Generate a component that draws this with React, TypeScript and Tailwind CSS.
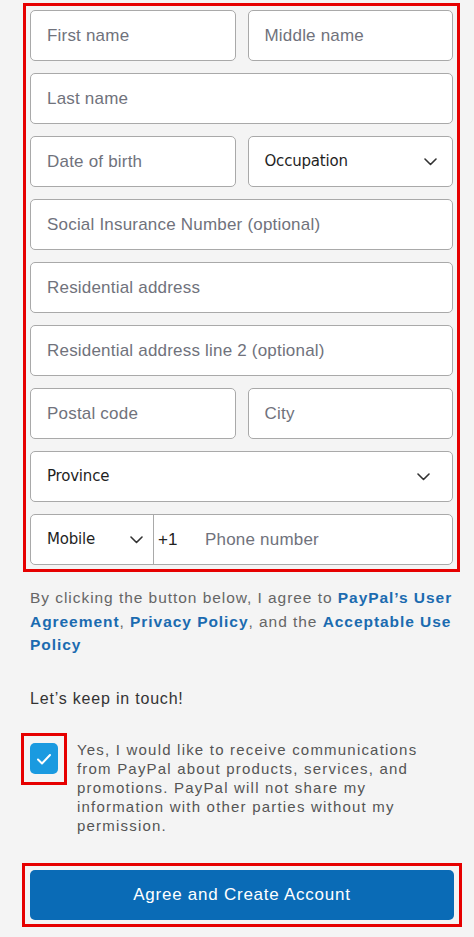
import React from "react";

const field =
  "h-[51px] w-full rounded-[5px] border border-[#a9a9a9] bg-white px-4 flex items-center text-[17px] text-[#70727c] tracking-[0.2px]";

function Chevron() {
  return (
    <svg width="13" height="8" viewBox="0 0 13 8" fill="none" className="shrink-0">
      <path d="M1 1l5.5 5.5L12 1" stroke="#333" strokeWidth="1.6" strokeLinecap="round" strokeLinejoin="round" />
    </svg>
  );
}

function Input({ label }: { label: string }) {
  return <div className={field}>{label}</div>;
}

function Select({ label, pr = "pr-5" }: { label: string; pr?: string }) {
  return (
    <div className={`${field} justify-between ${pr}`}>
      <span className="text-[15px] text-[#1f1f1f] font-['DejaVu_Sans',sans-serif] tracking-[-0.2px]">{label}</span>
      <Chevron />
    </div>
  );
}

export default function App() {
  return (
    <div className="w-[474px] h-[937px] bg-[#f4f4f4] pt-[3px] font-['Liberation_Sans',Arial,sans-serif]">
      {/* form fields */}
      <div className="ml-[23px] w-[437px] border-[3px] border-[#e60000] p-[4px] flex flex-col gap-3">
        <div className="grid grid-cols-2 gap-3">
          <Input label="First name" />
          <Input label="Middle name" />
        </div>
        <Input label="Last name" />
        <div className="grid grid-cols-2 gap-3">
          <Input label="Date of birth" />
          <Select label="Occupation" pr="pr-[15px]" />
        </div>
        <Input label="Social Insurance Number (optional)" />
        <Input label="Residential address" />
        <Input label="Residential address line 2 (optional)" />
        <div className="grid grid-cols-2 gap-3">
          <Input label="Postal code" />
          <Input label="City" />
        </div>
        <Select label="Province" pr="pr-[22px]" />
        <div className="h-[51px] w-full rounded-[5px] border border-[#a9a9a9] bg-white flex items-stretch">
          <div className="w-[123px] flex items-center justify-between pl-4 pr-[10px] border-r border-[#a9a9a9]">
            <span className="text-[15px] text-[#1f1f1f] font-['DejaVu_Sans',sans-serif] tracking-[-0.2px]">Mobile</span>
            <Chevron />
          </div>
          <div className="flex items-center pl-1 text-[17px]">
            <span className="text-[#222] w-[47px]">+1</span>
            <span className="text-[#70727c] tracking-[0.2px]">Phone number</span>
          </div>
        </div>
      </div>

      {/* legal */}
      <p className="ml-[30px] mr-[14px] mt-[14px] text-[15.5px] leading-[23.5px] text-[#666] tracking-[0.95px]">
        By clicking the button below, I agree to{" "}
        <span className="font-bold text-[#1b6bb0]">PayPal’s User Agreement</span>,{" "}
        <span className="font-bold text-[#1b6bb0]">Privacy Policy</span>, and the{" "}
        <span className="font-bold text-[#1b6bb0]">Acceptable Use Policy</span>
      </p>

      <p className="ml-[30px] mt-[30px] text-[16px] text-[#333] tracking-[0.8px]">Let’s keep in touch!</p>

      <div className="mt-[22px] flex items-start">
        <div className="ml-[21px] w-[46px] h-[52px] border-[3px] border-[#e60000] flex items-center justify-center shrink-0">
          <div className="w-[28px] h-[31px] rounded-[5px] bg-[#1a9ae0] flex items-center justify-center">
            <svg width="16" height="12" viewBox="0 0 16 12" fill="none">
              <path d="M2 6.5l4 4L14 2" stroke="white" strokeWidth="2" strokeLinecap="round" strokeLinejoin="round" />
            </svg>
          </div>
        </div>
        <p className="ml-[10px] mt-[7px] w-[348px] text-[15px] leading-[19px] text-[#555] tracking-[1.2px]">
          Yes, I would like to receive communications from PayPal about products, services, and promotions. PayPal will
          not share my information with other parties without my permission.
        </p>
      </div>

      {/* submit */}
      <div className="ml-[22px] mt-[28px] w-[440px] border-[3px] border-[#e60000] px-[5px] py-[4px]">
        <div className="h-[50px] rounded-[5px] bg-[#0a6bb6] flex items-center justify-center text-white text-[17px] tracking-[0.75px]">
          Agree and Create Account
        </div>
      </div>
    </div>
  );
}
